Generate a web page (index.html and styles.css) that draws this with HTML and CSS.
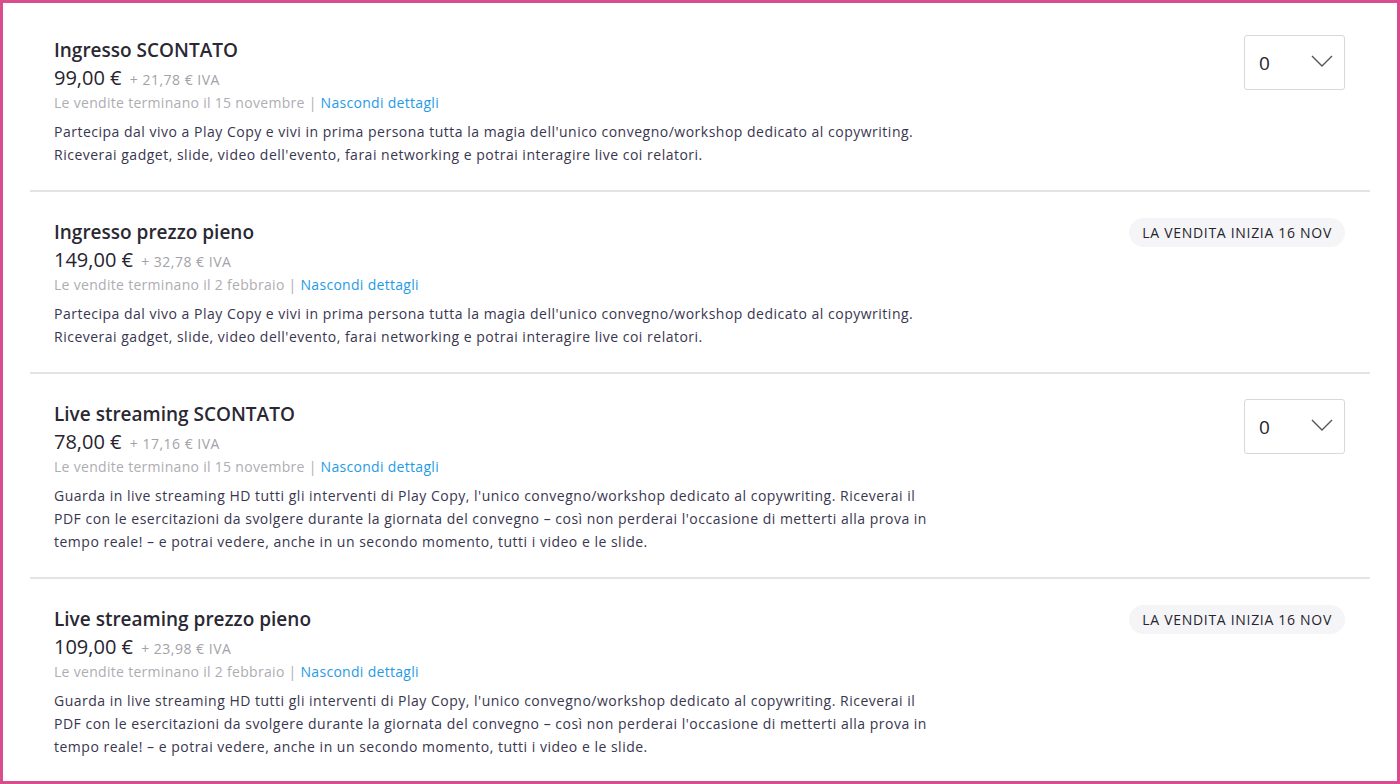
FILE: index.html
```html
<!DOCTYPE html>
<html lang="it">
<head>
<meta charset="utf-8">
<title>Biglietti</title>
<link rel="stylesheet" href="styles.css">
</head>
<body>
<div class="frame">
  <ul class="tickets">
    <li class="ticket">
      <div class="info">
        <h3 class="name">Ingresso SCONTATO</h3>
        <div class="price">99,00 € <span class="tax">+ 21,78 € IVA</span></div>
        <div class="sales">Le vendite terminano il 15 novembre | <a class="toggle" href="#">Nascondi dettagli</a></div>
        <p class="desc">Partecipa dal vivo a Play Copy e vivi in prima persona tutta la magia dell'unico convegno/workshop dedicato al copywriting. Riceverai gadget, slide, video dell'evento, farai networking e potrai interagire live coi relatori.</p>
      </div>
      <div class="action">
        <div class="select"><span class="qty">0</span><svg class="chev" width="22" height="12" viewBox="0 0 22 12"><path d="M1 1 L11 11 L21 1" fill="none" stroke="#555" stroke-width="1.4"/></svg></div>
      </div>
    </li>
    <li class="ticket">
      <div class="info">
        <h3 class="name">Ingresso prezzo pieno</h3>
        <div class="price">149,00 € <span class="tax">+ 32,78 € IVA</span></div>
        <div class="sales">Le vendite terminano il 2 febbraio | <a class="toggle" href="#">Nascondi dettagli</a></div>
        <p class="desc">Partecipa dal vivo a Play Copy e vivi in prima persona tutta la magia dell'unico convegno/workshop dedicato al copywriting. Riceverai gadget, slide, video dell'evento, farai networking e potrai interagire live coi relatori.</p>
      </div>
      <div class="action">
        <span class="badge">La vendita inizia 16 nov</span>
      </div>
    </li>
    <li class="ticket">
      <div class="info">
        <h3 class="name">Live streaming SCONTATO</h3>
        <div class="price">78,00 € <span class="tax">+ 17,16 € IVA</span></div>
        <div class="sales">Le vendite terminano il 15 novembre | <a class="toggle" href="#">Nascondi dettagli</a></div>
        <p class="desc">Guarda in live streaming HD tutti gli interventi di Play Copy, l'unico convegno/workshop dedicato al copywriting. Riceverai il PDF con le esercitazioni da svolgere durante la giornata del convegno – così non perderai l'occasione di metterti alla prova in tempo reale! – e potrai vedere, anche in un secondo momento, tutti i video e le slide.</p>
      </div>
      <div class="action">
        <div class="select"><span class="qty">0</span><svg class="chev" width="22" height="12" viewBox="0 0 22 12"><path d="M1 1 L11 11 L21 1" fill="none" stroke="#555" stroke-width="1.4"/></svg></div>
      </div>
    </li>
    <li class="ticket">
      <div class="info">
        <h3 class="name">Live streaming prezzo pieno</h3>
        <div class="price">109,00 € <span class="tax">+ 23,98 € IVA</span></div>
        <div class="sales">Le vendite terminano il 2 febbraio | <a class="toggle" href="#">Nascondi dettagli</a></div>
        <p class="desc">Guarda in live streaming HD tutti gli interventi di Play Copy, l'unico convegno/workshop dedicato al copywriting. Riceverai il PDF con le esercitazioni da svolgere durante la giornata del convegno – così non perderai l'occasione di metterti alla prova in tempo reale! – e potrai vedere, anche in un secondo momento, tutti i video e le slide.</p>
      </div>
      <div class="action">
        <span class="badge">La vendita inizia 16 nov</span>
      </div>
    </li>
  </ul>
</div>
</body>
</html>
```
FILE: styles.css
```css
* { box-sizing: border-box; }
html, body { margin: 0; padding: 0; background: #fff; }
body {
  font-family: "Open Sans", "Liberation Sans", sans-serif;
  color: #39364f;
}
.frame {
  width: 1400px;
  height: 784px;
  border: 3px solid #d94d8f;
  overflow: hidden;
  background: #fff;
}
.tickets {
  list-style: none;
  margin: 0;
  padding: 7px 27px 0;
}
.ticket {
  display: flex;
  justify-content: space-between;
  align-items: flex-start;
  padding: 28px 25px 24px 24px;
  border-bottom: 2px solid #e3e3e6;
}
.info { width: 885px; }
.name {
  margin: 0;
  font-size: 19px;
  line-height: 24px;
  font-weight: 600;
  color: #2a2833;
}
.price {
  margin-top: 4px;
  font-size: 20px;
  line-height: 24px;
  color: #26242f;
}
.tax {
  font-size: 14px;
  letter-spacing: 0.5px;
  color: #a3a2a8;
  margin-left: 3px;
}
.sales {
  margin-top: 1px;
  font-size: 14px;
  line-height: 20px;
  letter-spacing: 0.3px;
  color: #aeadb2;
}
.toggle {
  color: #1f9be6;
  text-decoration: none;
}
.desc {
  margin: 7px 0 0;
  font-size: 14px;
  line-height: 23px;
  letter-spacing: 0.5px;
  color: #39364f;
}
.action {
  display: flex;
  justify-content: flex-end;
}
.select {
  margin-top: -3px;
  width: 101px;
  height: 55px;
  border: 1px solid #d8d8dc;
  border-radius: 3px;
  display: flex;
  align-items: center;
  justify-content: space-between;
  padding: 0 11px 0 14px;
}
.qty {
  font-size: 19px;
  color: #26242f;
}
.chev { display: block; margin-top: -4px; }
.badge {
  display: inline-block;
  margin-top: -2px;
  height: 29px;
  line-height: 29px;
  padding: 0 13px;
  border-radius: 15px;
  background: #f5f5f7;
  font-size: 14px;
  letter-spacing: 0.7px;
  text-transform: uppercase;
  color: #26242f;
  white-space: nowrap;
}
```
